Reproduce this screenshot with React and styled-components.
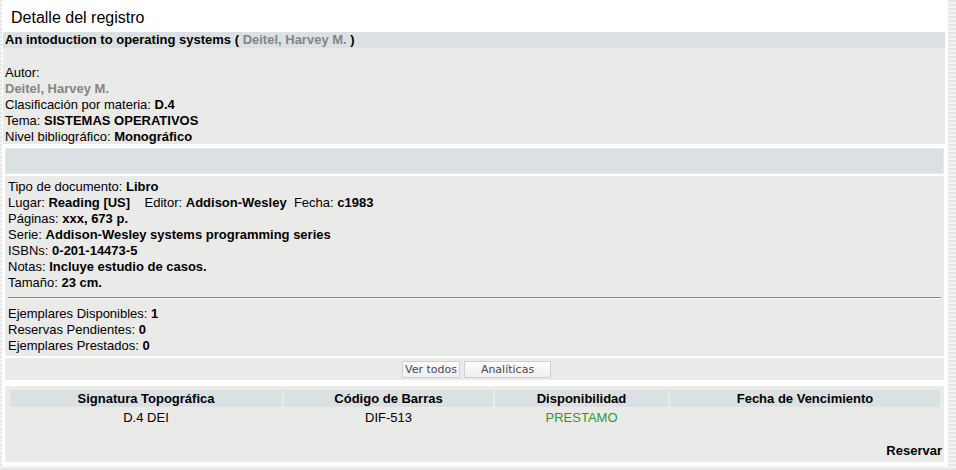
import styled, { createGlobalStyle } from 'styled-components';

const Global = createGlobalStyle`
  html, body {
    margin: 0;
    padding: 0;
  }
  body {
    width: 956px;
    height: 470px;
    overflow: hidden;
    background: repeating-linear-gradient(
      to bottom,
      #e6e6e6 0px,
      #e6e6e6 2px,
      #f3f3f3 2px,
      #f3f3f3 4px
    );
    font-family: "Liberation Sans", Arial, sans-serif;
    font-size: 13px;
    color: #000;
  }
`;

const Page = styled.div`
  margin-left: 2px;
  width: 946px;
  height: 466px;
  background: #fff;
  padding: 0 3px 0 1px;
  box-sizing: border-box;
`;

const Heading = styled.h1`
  margin: 0;
  height: 32px;
  padding: 10px 0 0 8px;
  box-sizing: border-box;
  font-size: 16px;
  font-weight: normal;
  line-height: 16px;
`;

const TitleBar = styled.div`
  background: #dbe0e3;
  height: 16px;
  line-height: 16px;
  padding-left: 2px;
  font-weight: bold;
`;

const Muted = styled.span`
  color: #858585;
  font-weight: bold;
`;

const Summary = styled.div`
  background: #eaeae8;
  padding: 17px 2px 0;
  height: 96px;
  box-sizing: border-box;
  line-height: 16px;
  overflow: hidden;
`;

const Line = styled.div`
  line-height: 16px;
  white-space: pre;
`;

const B = styled.b`
  font-weight: bold;
`;

const Group = styled.div`
  margin: 4px 1px 0 2px;
  display: flex;
  flex-direction: column;
  gap: 2px;
`;

const Band = styled.div`
  height: 26px;
  background: #dbe1e3;
  border: 1px solid #e4eaec;
  box-sizing: border-box;
`;

const Details = styled.div`
  background: #eaeae8;
  padding: 3px 3px 2px 3px;
  height: 180px;
  box-sizing: border-box;
`;

const Rule = styled.hr`
  margin: 6px 0 7px 0;
  border: 0;
  border-top: 1px solid #878787;
  border-bottom: 1px solid #f6f6f6;
  height: 0;
`;

const Actions = styled.div`
  background: #eaeae8;
  height: 22px;
  display: flex;
  justify-content: center;
  align-items: center;
  gap: 4px;
  padding-left: 4px;
`;

const Button = styled.button`
  height: 17px;
  width: ${p => p.$w}px;
  padding: 0;
  font-family: "DejaVu Sans", Verdana, sans-serif;
  font-size: 11px;
  color: #4a4a4a;
  background: linear-gradient(#fbfbfb, #f0f0f0);
  border: 1px solid #d0d0d0;
  border-radius: 0;
  line-height: 15px;
`;

const Copies = styled.div`
  background: #eaeae8;
  margin-top: 2px;
  padding: 4px 2px 3px 5px;
  height: 76px;
  box-sizing: border-box;
  display: flex;
  flex-direction: column;
`;

const Table = styled.div`
  display: grid;
  grid-template-columns: 272px 209px 173px 270px;
  column-gap: 2px;
`;

const HeadCell = styled.div`
  background: #dbe1e3;
  height: 17px;
  line-height: 17px;
  text-align: center;
  font-weight: bold;
`;

const Cell = styled.div`
  text-align: center;
  line-height: 16px;
  padding-top: 3px;
  color: ${p => p.$color || '#000'};
`;

const Reserve = styled.div`
  margin-top: auto;
  text-align: right;
  font-weight: bold;
  line-height: 16px;
`;

const Field = ({ label, value }) => (
  <Line>
    {label}: <B>{value}</B>
  </Line>
);

const App = () => (
  <>
    <Global />
    <Page>
      <Heading>Detalle del registro</Heading>
      <TitleBar>
        An intoduction to operating systems ( <Muted>Deitel, Harvey M.</Muted> )
      </TitleBar>
      <Summary>
        <Line>Autor:</Line>
        <Line><Muted>Deitel, Harvey M.</Muted></Line>
        <Field label="Clasificación por materia" value="D.4" />
        <Field label="Tema" value="SISTEMAS OPERATIVOS" />
        <Field label="Nivel bibliográfico" value="Monográfico" />
      </Summary>
      <Group>
        <Band />
        <Details>
          <Field label="Tipo de documento" value="Libro" />
          <Line>
            Lugar: <B>Reading [US]</B>{'    '}Editor: <B>Addison-Wesley</B>{'  '}Fecha: <B>c1983</B>
          </Line>
          <Field label="Páginas" value="xxx, 673 p." />
          <Field label="Serie" value="Addison-Wesley systems programming series" />
          <Field label="ISBNs" value="0-201-14473-5" />
          <Field label="Notas" value="Incluye estudio de casos." />
          <Field label="Tamaño" value="23 cm." />
          <Rule />
          <Field label="Ejemplares Disponibles" value="1" />
          <Field label="Reservas Pendientes" value="0" />
          <Field label="Ejemplares Prestados" value="0" />
        </Details>
        <Actions>
          <Button $w={58}>Ver todos</Button>
          <Button $w={87}>Analíticas</Button>
        </Actions>
      </Group>
      <Group>
        <Copies>
          <Table>
            <HeadCell>Signatura Topográfica</HeadCell>
            <HeadCell>Código de Barras</HeadCell>
            <HeadCell>Disponibilidad</HeadCell>
            <HeadCell>Fecha de Vencimiento</HeadCell>
            <Cell>D.4 DEI</Cell>
            <Cell>DIF-513</Cell>
            <Cell $color="#2e9a2e">PRESTAMO</Cell>
            <Cell></Cell>
          </Table>
          <Reserve>Reservar</Reserve>
        </Copies>
      </Group>
    </Page>
  </>
);

export default App;
